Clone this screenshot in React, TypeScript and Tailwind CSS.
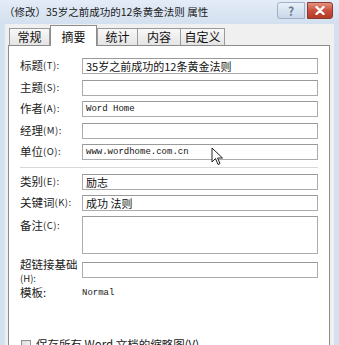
import React from "react";

const cjk = { fontFamily: '"Noto Sans CJK SC", "Liberation Sans", sans-serif' };
const mono = { fontFamily: '"Liberation Mono", "Noto Sans CJK SC", monospace' };

type Row = { label: string; key: string; value?: string; mono?: boolean };

const topRows: Row[] = [
  { label: "标题", key: "(T):", value: "35岁之前成功的12条黄金法则" },
  { label: "主题", key: "(S):" },
  { label: "作者", key: "(A):", value: "Word Home", mono: true },
  { label: "经理", key: "(M):" },
  { label: "单位", key: "(O):", value: "www.wordhome.com.cn", mono: true },
];

const tabs = [
  { name: "常规", w: "w-[41px]" },
  { name: "摘要", w: "w-[47px]" },
  { name: "统计", w: "w-[41px]" },
  { name: "内容", w: "w-[44px]" },
  { name: "自定义", w: "w-[45px]" },
];

const Label: React.FC<{ text: string; hotkey: string }> = ({ text, hotkey }) => (
  <div
    className="flex h-[16px] w-[62px] shrink-0 items-center whitespace-nowrap text-[11.5px] leading-none text-[#222]"
    style={cjk}
  >
    {text}
    <span className="text-[9.5px] leading-none tracking-[0.5px]">{hotkey}</span>
  </div>
);

const Field: React.FC<{ value?: string; mono?: boolean; tall?: boolean }> = ({
  value,
  mono: isMono,
  tall,
}) => (
  <div
    className={`flex flex-1 overflow-hidden whitespace-nowrap border border-[#ababab] border-t-[#9a9a9a] bg-white px-[3px] text-[#111] ${
      tall ? "h-[38px] items-start" : "h-[16px] items-center"
    }`}
  >
    {value && (
      <span
        className={isMono ? "text-[9px] leading-[14px]" : "text-[11px] leading-[14px]"}
        style={isMono ? mono : cjk}
      >
        {value}
      </span>
    )}
  </div>
);

const Cursor = () => (
  <svg
    className="absolute left-[202px] top-[101px]"
    width="13"
    height="20"
    viewBox="0 0 13 20"
  >
    <path
      d="M1 1 L1 15 L4.5 11.5 L7 17.5 L9 16.6 L6.6 11 L11.5 11 Z"
      fill="#fff"
      stroke="#222"
      strokeWidth="1"
      strokeLinejoin="round"
    />
  </svg>
);

export default function App() {
  return (
    <div className="relative h-[345px] w-[339px] select-none overflow-hidden bg-[#d4e1f0]">
      {/* title bar */}
      <div className="flex h-[24px] items-center bg-gradient-to-b from-[#e3ecf7] to-[#d3e0ef] pl-[4px] pr-[6px]">
        <span className="flex-1 whitespace-nowrap text-[10.5px] text-[#1a1a1a]" style={cjk}>
          （修改）35岁之前成功的12条黄金法则 属性
        </span>
        <div className="mt-[2px] flex h-[17px] gap-[2px] self-start">
          <div
            className="flex w-[28px] items-center justify-center rounded-l-[3px] border border-[#9fb0c8] bg-gradient-to-b from-[#eaf1f9] to-[#c8d7ea] text-[12px] font-bold text-[#6b7b92]"
            style={cjk}
          >
            ?
          </div>
          <div className="flex w-[26px] items-center justify-center rounded-r-[3px] border border-[#8a3a30] bg-gradient-to-b from-[#e4927f] via-[#c8503c] to-[#b43a26]">
            <svg width="10" height="9" viewBox="0 0 10 9">
              <path d="M1.5 1 L8.5 8 M8.5 1 L1.5 8" stroke="#fff" strokeWidth="2.4" strokeLinecap="round" />
            </svg>
          </div>
        </div>
      </div>

      {/* client area */}
      <div className="mx-[5px] h-[321px] bg-[#f0f0f0] pl-[3px] pr-[4px] pt-[3px]">
        {/* tabs */}
        <div className="flex h-[18px] items-end pl-[1px]">
          {tabs.map((t, i) =>
            i === 1 ? (
              <div
                key={t.name}
                className={`relative z-10 -mb-[1px] flex h-[21px] ${t.w} items-start justify-center border border-b-0 border-[#8c8c8c] bg-white pt-[2px] text-[12px] text-[#111]`}
                style={cjk}
              >
                {t.name}
              </div>
            ) : (
              <div
                key={t.name}
                className={`flex h-[17px] ${t.w} items-center justify-center border border-b-0 border-[#9a9a9a] bg-gradient-to-b from-[#f8f8f8] to-[#e4e4e4] text-[12px] text-[#111] ${
                  i > 2 ? "-ml-[1px]" : ""
                }`}
                style={cjk}
              >
                {t.name}
              </div>
            )
          )}
        </div>

        {/* panel */}
        <div className="relative h-[310px] border border-[#8c8c8c] bg-white pl-[11px] pr-[11px] pt-[12px]">
          <div className="flex flex-col gap-[5.5px]">
            {topRows.map((r) => (
              <div key={r.label} className="flex h-[16px] items-center">
                <Label text={r.label} hotkey={r.key} />
                <Field value={r.value} mono={r.mono} />
              </div>
            ))}
          </div>

          <div className="mt-[7px] h-px bg-[#d8d8d8]" />

          <div className="mt-[6px] flex flex-col gap-[5px]">
            <div className="flex h-[16px] items-center">
              <Label text="类别" hotkey="(E):" />
              <Field value="励志" />
            </div>
            <div className="flex h-[16px] items-center">
              <Label text="关键词" hotkey="(K):" />
              <Field value="成功 法则" />
            </div>
            <div className="flex items-start">
              <div className="pt-[2px]">
                <Label text="备注" hotkey=" (C):" />
              </div>
              <Field tall />
            </div>
          </div>

          <div className="mt-[4px] flex h-[26px] items-start">
            <div className="w-[62px] shrink-0 whitespace-nowrap text-[11.5px] text-[#222]" style={cjk}>
              <div className="leading-[12px]">超链接基础</div>
              <div className="mt-[3px] text-[9.5px] leading-[10px]">(H):</div>
            </div>
            <div className="mt-[4px] flex flex-1">
              <Field />
            </div>
          </div>

          <div className="mt-[1px] flex h-[16px] items-center">
            <div className="flex h-[16px] w-[62px] shrink-0 items-center text-[11.5px] leading-none text-[#222]" style={cjk}>
              模板:
            </div>
            <span className="text-[9px] leading-none text-[#222]" style={mono}>
              Normal
            </span>
          </div>

          <div className="mt-[38px] flex items-center gap-[5px] pl-[1px]">
            <div className="h-[10px] w-[10px] border border-[#8e8f8f] bg-gradient-to-br from-[#dcdcdc] to-[#fafafa]" />
            <span className="text-[11.5px] leading-none text-[#222]" style={cjk}>
              保存所有 Word 文档的缩略图(V)
            </span>
          </div>

          <Cursor />
        </div>
      </div>
    </div>
  );
}
